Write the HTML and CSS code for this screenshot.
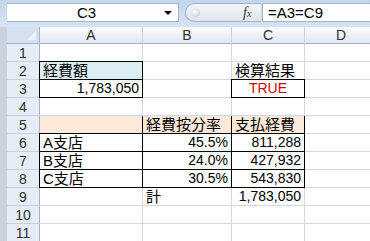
FILE: index.html
```html
<!DOCTYPE html>
<html lang="ja">
<head>
    <meta charset="UTF-8">
    <title>経費按分</title>
    <link rel="stylesheet" href="styles.css">
</head>
<body>
    <div class="window">
        <div class="formula-bar">
            <div class="name-box">
                <span class="name-text">C3</span>
                <span class="name-drop"></span>
            </div>
            <div class="pill"><span class="pill-knob"></span></div>
            <div class="fx"><i>f</i><i class="x">x</i></div>
            <div class="formula">=A3=C9</div>
        </div>

        <div class="sheet">
            <div class="corner"><span class="corner-tri"></span></div>
            <div class="col-head">A</div>
            <div class="col-head">B</div>
            <div class="col-head">C</div>
            <div class="col-head">D</div>

            <div class="row-head">1</div>
            <div class="cell"></div><div class="cell"></div><div class="cell"></div><div class="cell"></div>

            <div class="row-head">2</div>
            <div class="cell blue box-top box-left box-right">経費額</div>
            <div class="cell"></div>
            <div class="cell">検算結果</div>
            <div class="cell"></div>

            <div class="row-head">3</div>
            <div class="cell num box-top box-left box-right box-bottom">1,783,050</div>
            <div class="cell"></div>
            <div class="cell center red box-top box-left box-right box-bottom">TRUE</div>
            <div class="cell"></div>

            <div class="row-head">4</div>
            <div class="cell"></div><div class="cell"></div><div class="cell"></div><div class="cell"></div>

            <div class="row-head">5</div>
            <div class="cell peach"></div>
            <div class="cell peach box-left">経費按分率</div>
            <div class="cell peach box-left box-right">支払経費</div>
            <div class="cell"></div>

            <div class="row-head">6</div>
            <div class="cell box-top box-left box-right">A支店</div>
            <div class="cell num box-top box-right">45.5%</div>
            <div class="cell num box-top box-right">811,288</div>
            <div class="cell"></div>

            <div class="row-head">7</div>
            <div class="cell box-top box-left box-right">B支店</div>
            <div class="cell num box-top box-right">24.0%</div>
            <div class="cell num box-top box-right">427,932</div>
            <div class="cell"></div>

            <div class="row-head">8</div>
            <div class="cell box-top box-left box-right box-bottom">C支店</div>
            <div class="cell num box-top box-right box-bottom">30.5%</div>
            <div class="cell num box-top box-right box-bottom">543,830</div>
            <div class="cell"></div>

            <div class="row-head">9</div>
            <div class="cell"></div>
            <div class="cell">計</div>
            <div class="cell num">1,783,050</div>
            <div class="cell"></div>

            <div class="row-head">10</div>
            <div class="cell"></div><div class="cell"></div><div class="cell"></div><div class="cell"></div>

            <div class="row-head">11</div>
            <div class="cell"></div><div class="cell"></div><div class="cell"></div><div class="cell"></div>
        </div>
    </div>
</body>
</html>
```

FILE: styles.css
```css
body {
    margin: 0;
    background-color: #d5dce6;
    font-family: "Liberation Sans", "Noto Sans CJK JP", sans-serif;
    color: #000;
}

.window {
    width: 370px;
    height: 241px;
    overflow: hidden;
    padding-left: 7px;
    box-sizing: border-box;
    background: linear-gradient(to right, #c9d2de, #dfe5ee);
}

/* formula bar */

.formula-bar {
    height: 27px;
    margin-left: -7px;
    padding-left: 7px;
    padding-top: 3px;
    box-sizing: border-box;
    display: flex;
    align-items: flex-start;
    background: linear-gradient(#c4d6ec, #d6e3f3);
}

.name-box {
    width: 172px;
    height: 19px;
    background-color: #fff;
    border: 1px solid #a4b6cd;
    border-left: none;
    box-sizing: border-box;
    display: flex;
    align-items: center;
}

.name-text {
    flex-grow: 1;
    text-align: center;
    font-size: 15px;
    padding-left: 2px;
}

.name-drop {
    width: 0;
    height: 0;
    border-left: 4px solid transparent;
    border-right: 4px solid transparent;
    border-top: 4px solid #000;
    margin-right: 6px;
}

.pill {
    width: 76px;
    height: 19px;
    margin-left: 6px;
    border: 1px solid #9fb3cc;
    border-radius: 10px 0 0 10px;
    border-right: none;
    box-sizing: border-box;
    background: linear-gradient(#f4f6f9, #dfe5ec);
    position: relative;
}

.pill-knob {
    position: absolute;
    left: 5px;
    top: 4px;
    width: 9px;
    height: 9px;
    border-radius: 50%;
    background: radial-gradient(circle at 40% 40%, #ffffff, #b8c2cd);
}

.fx {
    position: relative;
    margin-left: -18px;
    width: 14px;
    height: 19px;
    font-family: "Liberation Serif", serif;
    font-size: 14px;
    line-height: 19px;
    color: #333;
}

.fx .x {
    font-size: 10px;
}

.formula {
    flex-grow: 1;
    height: 19px;
    margin-left: 5px;
    background-color: #fff;
    border: 1px solid #a4b6cd;
    border-right: none;
    box-sizing: border-box;
    font-size: 15px;
    line-height: 17px;
    padding-left: 5px;
}

/* grid */

.sheet {
    display: grid;
    grid-template-columns: 33px 103px 89px 73px 73px;
    grid-template-rows: 17px repeat(11, 18px);
    background-color: #fff;
    width: 371px;
}

.corner {
    background-color: #d4e0ef;
    border-right: 1px solid #9eb6ce;
    border-bottom: 1px solid #9eb6ce;
    box-sizing: border-box;
    position: relative;
}

.corner-tri {
    position: absolute;
    right: 3px;
    bottom: 3px;
    width: 0;
    height: 0;
    border-left: 9px solid transparent;
    border-bottom: 9px solid #eef3f9;
}

.col-head {
    background: linear-gradient(#fafbfd, #e2e8f1);
    border-right: 1px solid #c5d1e0;
    border-bottom: 1px solid #9eb6ce;
    box-sizing: border-box;
    text-align: center;
    font-size: 14px;
    line-height: 16px;
    color: #2f2f2f;
}

.row-head {
    background-color: #e6edf7;
    border-right: 1px solid #9eb6ce;
    border-bottom: 1px solid #c5d1e0;
    box-sizing: border-box;
    text-align: center;
    font-size: 14px;
    line-height: 18px;
    color: #2f2f2f;
}

.cell {
    border-right: 1px solid #d0d7e5;
    border-bottom: 1px solid #d0d7e5;
    box-sizing: border-box;
    font-size: 15px;
    line-height: 17px;
    padding: 0 3px;
    white-space: nowrap;
}

.cell.num {
    text-align: right;
    font-size: 14px;
}

.cell.center {
    text-align: center;
    font-size: 14px;
}

.cell.red {
    color: #d40000;
}

.cell.blue {
    background-color: #daeef3;
}

.cell.peach {
    background-color: #fde9d9;
}

.box-right {
    border-right-color: #000;
}

.box-bottom {
    border-bottom-color: #000;
}

.box-top {
    box-shadow: 0 -1px 0 #000;
}

.box-left {
    box-shadow: -1px 0 0 #000;
}

.box-top.box-left {
    box-shadow: 0 -1px 0 #000, -1px 0 0 #000, -1px -1px 0 #000;
}
```
